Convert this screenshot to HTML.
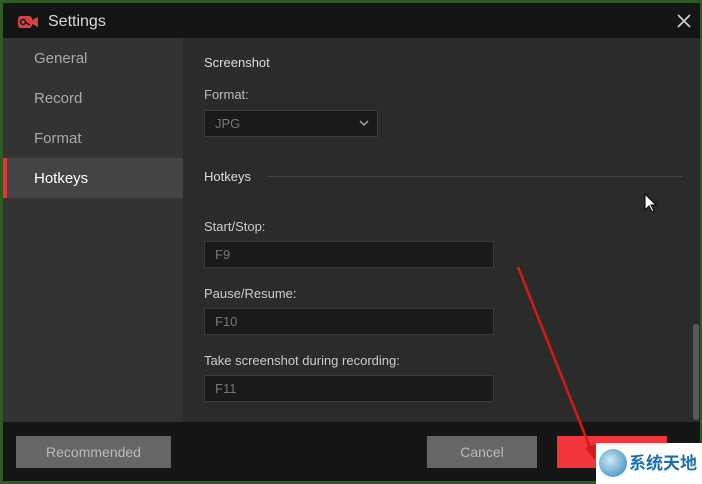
<!DOCTYPE html>
<html><head><meta charset="utf-8"><style>
*{margin:0;padding:0;box-sizing:border-box}
html,body{width:702px;height:484px;overflow:hidden}
body{background:#2f5a22;font-family:"Segoe UI","Liberation Sans",sans-serif;position:relative}
.win{position:absolute;left:3px;top:3px;width:697px;height:478px;background:#2b2b2b}
.title{position:absolute;left:0;top:0;width:697px;height:35px;background:#141414;color:#d8d8d8;font-size:16px}
.title span{position:absolute;left:45px;top:10px}
.side{position:absolute;left:0;top:35px;width:180px;height:384px;background:#333}
.side div{position:absolute;left:0;width:180px;height:40px;color:#aaa;font-size:15px;padding:12px 0 0 31px}
.side .act{background:#444;color:#fff;border-left:4px solid #e0363c;padding-left:27px}
.t{position:absolute;color:#ddd;font-size:13px}
.box{position:absolute;left:201px;width:290px;height:27px;background:#1a1a1a;border:1px solid #3c3c3c;color:#777;font-size:13px;padding:5px 0 0 10px}
.bottom{position:absolute;left:0;top:419px;width:697px;height:59px;background:#151515}
.btn{position:absolute;top:14px;height:32px;color:#bbb;font-size:14px;text-align:center;line-height:32px}
</style></head><body>
<div class="win">
 <div class="title">
  <svg style="position:absolute;left:14px;top:11px" width="22" height="16" viewBox="0 0 22 16"><rect x="1" y="2" width="14" height="12" rx="3" fill="#d94148"/><path d="M15 6l6-3v10l-6-3z" fill="#d94148"/><circle cx="6" cy="8" r="2.5" fill="none" stroke="#141414" stroke-width="1.5"/><path d="M8 8l5 3" stroke="#141414" stroke-width="1.5"/></svg>
  <span>Settings</span>
  <svg style="position:absolute;left:674px;top:11px" width="14" height="14"><path d="M1 1L13 13M13 1L1 13" stroke="#ccc" stroke-width="1.8"/></svg>
 </div>
 <div class="side">
  <div style="top:0">General</div>
  <div style="top:40px">Record</div>
  <div style="top:80px">Format</div>
  <div class="act" style="top:120px">Hotkeys</div>
 </div>
 <div class="t" style="left:201px;top:52px">Screenshot</div>
 <div class="t" style="left:201px;top:84px;color:#bbb">Format:</div>
 <div class="box" style="top:107px;width:174px">JPG
  <svg style="position:absolute;right:8px;top:9px" width="10" height="7"><path d="M1 1l4 4 4-4" stroke="#aaa" fill="none" stroke-width="1.4"/></svg></div>
 <div class="t" style="left:201px;top:166px">Hotkeys</div>
 <div style="position:absolute;left:264px;top:173px;width:415px;height:1px;background:#444"></div>
 <div class="t" style="left:201px;top:216px;color:#ccc">Start/Stop:</div>
 <div class="box" style="top:238px">F9</div>
 <div class="t" style="left:201px;top:283px;color:#ccc">Pause/Resume:</div>
 <div class="box" style="top:305px">F10</div>
 <div class="t" style="left:201px;top:350px;color:#ccc">Take screenshot during recording:</div>
 <div class="box" style="top:372px">F11</div>
 <div style="position:absolute;left:690px;top:321px;width:6px;height:96px;background:#5a5a5a;border-radius:3px"></div>
 <svg style="position:absolute;left:640px;top:190px" width="14" height="22"><path d="M2 1v16l4-4 3 6 2-1-3-6h5z" fill="#fff" stroke="#000"/></svg>
 <div class="bottom">
  <div class="btn" style="left:13px;width:155px;background:#666">Recommended</div>
  <div class="btn" style="left:424px;width:110px;background:#666">Cancel</div>
  <div class="btn" style="left:554px;width:110px;background:#f0353b;color:#fbb">Save</div>
 </div>
 <svg style="position:absolute;left:0;top:0" width="697" height="478"><path d="M515 264L590 452" stroke="#d51a1a" stroke-width="2.5"/><path d="M582 445l10 12 1-16z" fill="#d51a1a"/></svg>
</div>
<div style="position:absolute;left:596px;top:443px;width:106px;height:41px;background:#fff"></div>
<div style="position:absolute;left:599px;top:449px;width:28px;height:28px;border-radius:50%;background:radial-gradient(circle at 40% 40%,#cfe8f5,#2a7fb8)"></div>
<div style="position:absolute;left:629px;top:451px;white-space:nowrap;color:#1a6fae;font-size:17px;font-weight:bold;font-family:'Noto Sans CJK SC',sans-serif;line-height:22px">系统天地</div>
</body></html>
